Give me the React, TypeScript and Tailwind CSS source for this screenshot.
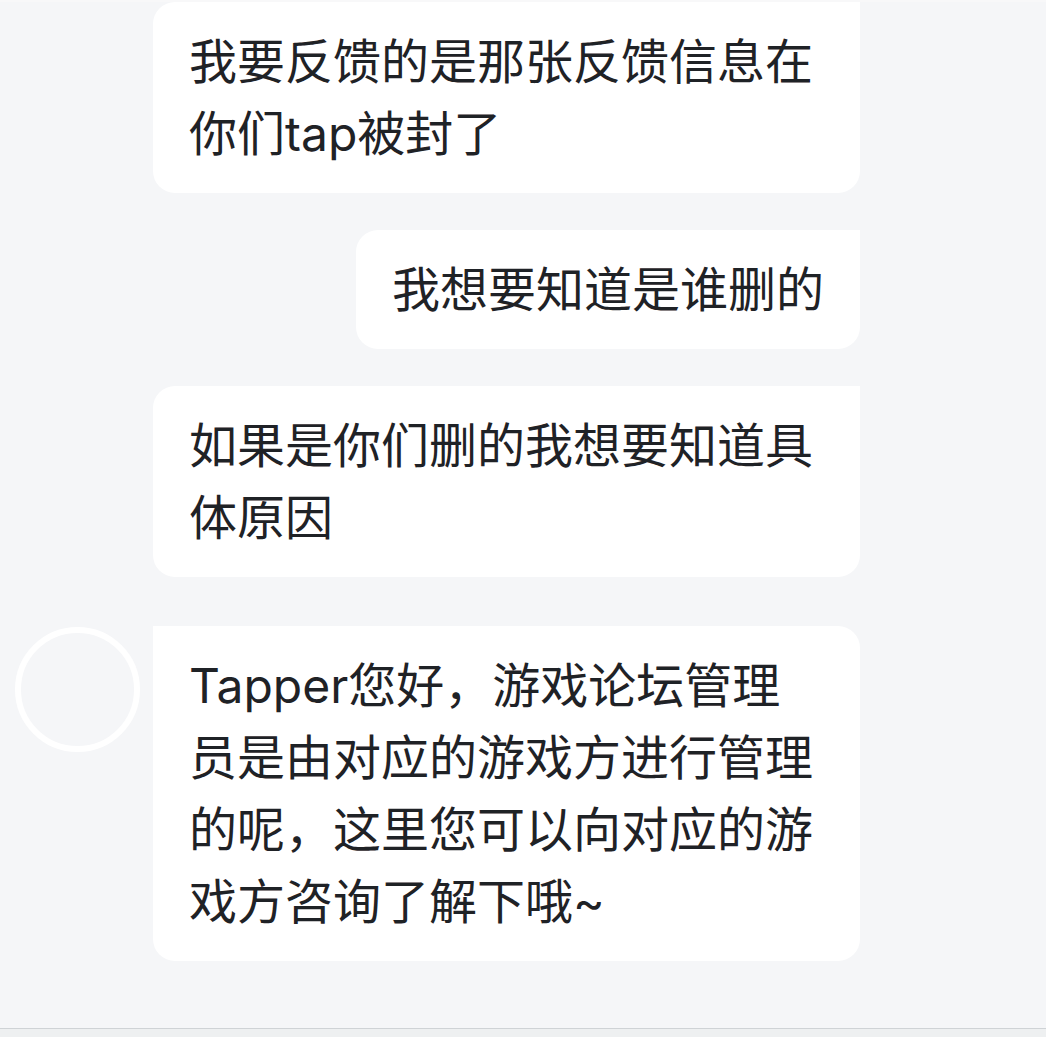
import { ReactNode } from 'react'

interface BubbleProps {
  children: ReactNode
  side: 'user' | 'agent'
}

function Bubble({ children, side }: BubbleProps) {
  const corners =
    side === 'user'
      ? 'rounded-tl-[22px] rounded-bl-[22px] rounded-br-[22px]'
      : 'rounded-tr-[22px] rounded-bl-[22px] rounded-br-[22px]'
  return (
    <div
      className={`max-w-[707px] bg-white px-[36px] pt-[24px] pb-[23px] text-[48px] leading-[72px] text-[#1f2226] ${corners}`}
    >
      {children}
    </div>
  )
}

function UserMessage({ text }: { text: string }) {
  return (
    <div className="flex justify-end pl-[153px] pr-[186px]">
      <Bubble side="user">{text}</Bubble>
    </div>
  )
}

function AgentMessage({ text }: { text: string }) {
  return (
    <div className="flex items-start pl-[15px] pr-[186px]">
      {/* avatar placeholder */}
      <div className="mt-px h-[125px] w-[125px] shrink-0 rounded-full border-[6px] border-white bg-[#f5f6f8]" />
      <div className="ml-[13px] flex-1">
        <Bubble side="agent">{text}</Bubble>
      </div>
    </div>
  )
}

export default function App() {
  return (
    <div
      className="flex h-[1037px] w-full flex-col overflow-hidden bg-[#f5f6f8]"
      style={{ fontFamily: 'Inter, "Noto Sans CJK SC", sans-serif' }}
    >
      <div className="h-[2px] bg-[#f8f8f9]" />
      <div className="flex flex-1 flex-col">
        <UserMessage text="我要反馈的是那张反馈信息在你们tap被封了" />
        <div className="h-[37px]" />
        <UserMessage text="我想要知道是谁删的" />
        <div className="h-[37px]" />
        <UserMessage text="如果是你们删的我想要知道具体原因" />
        <div className="h-[49px]" />
        <AgentMessage text="Tapper您好，游戏论坛管理员是由对应的游戏方进行管理的呢，这里您可以向对应的游戏方咨询了解下哦~" />
      </div>
      <div className="h-[9px] border-t border-[#cfd3d6] bg-[#eef0f1]" />
    </div>
  )
}
